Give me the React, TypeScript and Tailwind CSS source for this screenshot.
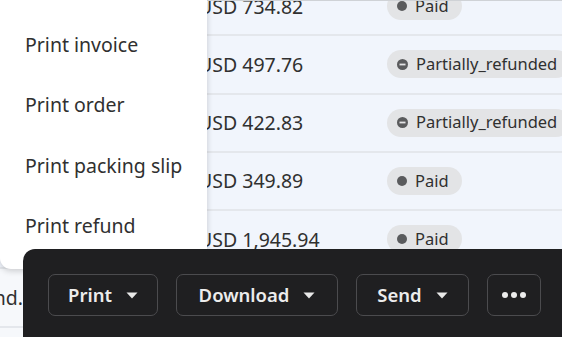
import React from "react";

interface IRow {
  customer: string;
  amount: string;
  status: "Paid" | "Partially_refunded";
}

const rows: IRow[] = [
  { customer: "Kunde and.", amount: "USD 734.82", status: "Paid" },
  { customer: "Hintz and.", amount: "USD 497.76", status: "Partially_refunded" },
  { customer: "Bode and.", amount: "USD 422.83", status: "Partially_refunded" },
  { customer: "Mraz and.", amount: "USD 349.89", status: "Paid" },
  { customer: "Haley and.", amount: "USD 1,945.94", status: "Paid" },
  { customer: "Legros and.", amount: "USD 612.40", status: "Paid" },
  { customer: "Funk and.", amount: "USD 88.10", status: "Paid" },
];

const menuItems = ["Print invoice", "Print order", "Print packing slip", "Print refund"];

const Caret = () => (
  <svg width="12" height="7" viewBox="0 0 12 7" className="shrink-0">
    <path d="M0.5 0.5h11L6 6.5z" fill="#e8e8e8" />
  </svg>
);

const StatusBadge = ({ status }: { status: IRow["status"] }) => (
  <div className="flex h-[28px] items-center gap-[8px] rounded-full bg-[#e3e4e6] pl-[10px] pr-[13px] text-[16.5px] text-[#303030] whitespace-nowrap">
    {status === "Paid" ? (
      <span className="h-[10px] w-[10px] rounded-full bg-[#5a5b5d]" />
    ) : (
      <svg width="11" height="11" viewBox="0 0 11 11">
        <circle cx="5.5" cy="5.5" r="5.5" fill="#5a5b5d" />
        <rect x="2.5" y="4.6" width="6" height="1.8" fill="#e3e4e6" />
      </svg>
    )}
    {status}
  </div>
);

const App = () => {
  return (
    <div
      className="relative h-[337px] w-[562px] overflow-hidden bg-[#f6f8fb]"
      style={{ fontFamily: '"Noto Sans", "Open Sans", sans-serif' }}
    >
      {/* table rows */}
      <div className="mt-[-22px] flex flex-col">
        {rows.map((row, i) => (
          <div
            key={i}
            className={`flex h-[58.3px] shrink-0 items-center border-b-2 border-[#e4e7ec] ${i < 5 ? "bg-[#f1f5fc]" : "bg-[#f6f8fb]"}`}
          >
            <div className="flex w-[23px] shrink-0 justify-end overflow-hidden whitespace-nowrap text-[19.5px] text-[#303030]">
              {row.customer}
            </div>
            <div className="w-[159px] shrink-0" />
            <div className="w-[205px] shrink-0 pl-4 text-[19.5px] text-[#303030] whitespace-nowrap">{row.amount}</div>
            <StatusBadge status={row.status} />
          </div>
        ))}
      </div>
      <div className="absolute left-0 top-0 h-[1px] w-full bg-[#cfd2d6]" />

      {/* print menu */}
      <div className="absolute left-0 top-0 flex w-[207px] flex-col rounded-b-[11px] bg-white pt-[14px] pb-[13px] shadow-[0_2px_6px_rgba(0,0,0,0.18)]">
        {menuItems.map((item) => (
          <div key={item} className="flex h-[60.6px] items-center pl-[25px] text-[19.5px] text-[#303030] whitespace-nowrap">
            {item}
          </div>
        ))}
      </div>

      {/* bulk action bar */}
      <div className="absolute left-[23px] top-[249px] flex h-[100px] w-[560px] gap-[18px] rounded-tl-[12px] bg-[#1f1f21] pl-[25px] pt-[25px]">
        <button className="flex h-[42px] w-[110px] items-center justify-center gap-[14px] rounded-[7px] border border-[#4b4b4e] text-[18.5px] font-semibold text-[#ececec]">
          Print
          <Caret />
        </button>
        <button className="flex h-[42px] w-[162px] items-center justify-center gap-[14px] rounded-[7px] border border-[#4b4b4e] text-[18.5px] font-semibold text-[#ececec]">
          Download
          <Caret />
        </button>
        <button className="flex h-[42px] w-[113px] items-center justify-center gap-[14px] rounded-[7px] border border-[#4b4b4e] text-[18.5px] font-semibold text-[#ececec]">
          Send
          <Caret />
        </button>
        <button className="flex h-[42px] w-[54px] items-center justify-center gap-[3px] rounded-[7px] border border-[#4b4b4e]">
          <span className="h-[6px] w-[6px] rounded-full bg-[#ececec]" />
          <span className="h-[6px] w-[6px] rounded-full bg-[#ececec]" />
          <span className="h-[6px] w-[6px] rounded-full bg-[#ececec]" />
        </button>
      </div>
    </div>
  );
};

export default App;
